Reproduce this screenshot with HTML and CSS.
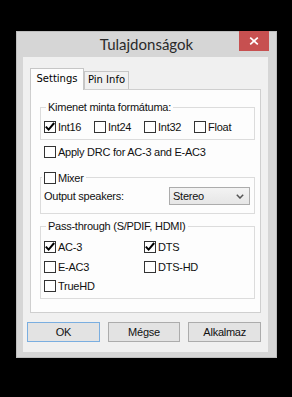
FILE: index.html
```html
<!DOCTYPE html>
<html>
<head>
<meta charset="utf-8">
<title>Tulajdonságok</title>
<link rel="stylesheet" href="styles.css">
</head>
<body>
<div class="window">
  <div class="titlebar">
    <span></span>
    <div class="title">Tulajdonságok</div>
    <div class="close">
      <svg width="10" height="8" viewBox="0 0 10 8"><path d="M1.2 0.6 L8.8 7.4 M8.8 0.6 L1.2 7.4" stroke="#fff" stroke-width="1.7" fill="none"/></svg>
    </div>
  </div>
  <div class="client">
    <div class="tabs">
      <div class="tab active">Settings</div>
      <div class="tab pin">Pin Info</div>
    </div>
    <div class="pane">
      <fieldset class="group g1">
        <legend>Kimenet minta formátuma:</legend>
        <div class="grid4">
          <div class="cb"><span class="box"><svg width="10" height="10" viewBox="0 0 10 10"><path d="M0.8 4.6 L3.6 7.6 L9.2 1" stroke="#000" stroke-width="2" fill="none"/></svg></span><span>Int16</span></div>
          <div class="cb"><span class="box"></span><span>Int24</span></div>
          <div class="cb"><span class="box"></span><span>Int32</span></div>
          <div class="cb"><span class="box"></span><span>Float</span></div>
        </div>
      </fieldset>
      <div class="cb drc"><span class="box"></span><span>Apply DRC for AC-3 and E-AC3</span></div>
      <fieldset class="group g2">
        <legend class="legend-cb"><span class="cb"><span class="box"></span><span>Mixer</span></span></legend>
        <div class="speakers">
          <span>Output speakers:</span>
          <div class="select"><span>Stereo</span><svg width="8" height="5" viewBox="0 0 8 5"><path d="M0.8 0.8 L4 4 L7.2 0.8" stroke="#555" stroke-width="1.5" fill="none"/></svg></div>
        </div>
      </fieldset>
      <fieldset class="group g3">
        <legend>Pass-through (S/PDIF, HDMI)</legend>
        <div class="grid2">
          <div class="cb"><span class="box"><svg width="10" height="10" viewBox="0 0 10 10"><path d="M0.8 4.6 L3.6 7.6 L9.2 1" stroke="#000" stroke-width="2" fill="none"/></svg></span><span>AC-3</span></div>
          <div class="cb"><span class="box"><svg width="10" height="10" viewBox="0 0 10 10"><path d="M0.8 4.6 L3.6 7.6 L9.2 1" stroke="#000" stroke-width="2" fill="none"/></svg></span><span>DTS</span></div>
          <div class="cb"><span class="box"></span><span>E-AC3</span></div>
          <div class="cb"><span class="box"></span><span>DTS-HD</span></div>
          <div class="cb"><span class="box"></span><span>TrueHD</span></div>
        </div>
      </fieldset>
    </div>
    <div class="buttons">
      <div class="btn default">OK</div>
      <div class="btn">Mégse</div>
      <div class="btn">Alkalmaz</div>
    </div>
  </div>
</div>
</body>
</html>
```
FILE: styles.css
```css
* { box-sizing: border-box; }
html, body { margin: 0; }
body {
  background: #000;
  padding: 31px 0 0 16px;
  font-family: "Liberation Sans", Arial, sans-serif;
  font-size: 11px;
  letter-spacing: -0.25px;
  color: #111;
}
.window {
  width: 261px;
  height: 327px;
  background: #d6d6d6;
  border: 1px solid #bdbdbd;
  display: flex;
  flex-direction: column;
}
.titlebar {
  height: 25px;
  flex: none;
  display: grid;
  grid-template-columns: 1fr auto 1fr;
  align-items: start;
}
.title {
  font-family: "Lato", "Liberation Sans", sans-serif;
  font-size: 15px;
  letter-spacing: 0;
  line-height: 25px;
  color: #2a2a2a;
  white-space: nowrap;
}
.close {
  justify-self: end;
  width: 30px;
  height: 20px;
  margin: -1px 7px 0 0;
  background: #c75050;
  display: flex;
  align-items: center;
  justify-content: center;
}
.close svg { display: block; }
.client {
  flex: 1;
  margin: 0 8px 5px 6px;
  background: #f0f0f0;
  padding: 11px 7px 0 7px;
}
.tabs {
  display: flex;
  align-items: flex-end;
  height: 21px;
}
.tab {
  font-family: "DejaVu Sans", sans-serif;
  font-size: 10px;
  letter-spacing: 0;
  line-height: 13px;
  text-align: center;
  border: 1px solid #c6c6c6;
  border-bottom: none;
  background: #f0f0f0;
  white-space: nowrap;
  color: #000;
}
.tab.active {
  width: 54px;
  height: 22px;
  margin-bottom: -1px;
  padding-top: 3px;
  background: #fdfdfd;
  position: relative;
  z-index: 1;
}
.tab.pin {
  width: 45px;
  height: 18px;
  padding-top: 1px;
}
.pane {
  border: 1px solid #cfcfcf;
  background: #fdfdfd;
  padding: 0 5px 13px 9px;
}
.group {
  margin: 0;
  min-width: 0;
  border: 1px solid #dcdcdc;
}
.group legend {
  padding: 0 2px;
  margin-left: 2px;
  height: 13px;
  line-height: 13px;
  white-space: nowrap;
}
.g1 { margin-top: 11px; padding: 7px 4px 6px 3px; }
.g2 { margin-top: 13px; padding: 0 4px 0 3px; }
.g3 { margin-top: 6px; padding: 8px 4px 6px 3px; }
.group legend.legend-cb {
  margin-left: -2px;
  padding: 0 2px;
}
.legend-cb .cb { height: 13px; }
.grid4 {
  display: grid;
  grid-template-columns: repeat(4, 50px);
}
.grid2 {
  display: grid;
  grid-template-columns: 100px 100px;
  row-gap: 7.5px;
}
.cb {
  display: flex;
  align-items: center;
  gap: 2px;
  height: 12px;
  line-height: 12px;
  white-space: nowrap;
}
.box {
  flex: none;
  width: 12px;
  height: 12px;
  border: 1px solid #333;
  background: #fff;
  display: flex;
}
.box svg { display: block; }
.drc { margin: 6px 0 0 4px; }
.speakers {
  display: flex;
  align-items: center;
  justify-content: space-between;
  padding: 3px 0 8px;
}
.select {
  width: 81px;
  height: 18px;
  border: 1px solid #acacac;
  background: linear-gradient(#f3f3f3, #e6e6e6);
  padding: 0 5px 0 3px;
  display: flex;
  align-items: center;
  justify-content: space-between;
}
.select svg { display: block; }
.buttons {
  display: flex;
  gap: 8px;
  margin: 9px 0 0 -3px;
}
.btn {
  width: 73px;
  height: 20px;
  border: 1px solid #acacac;
  background: #e3e3e3;
  text-align: center;
  line-height: 18px;
}
.btn.default {
  border-color: #7aaee0;
}
```
